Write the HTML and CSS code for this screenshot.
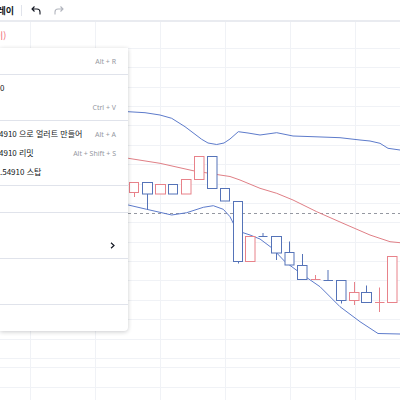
FILE: index.html
```html
<!DOCTYPE html>
<html lang="ko">
<head>
<meta charset="utf-8">
<title>Chart</title>
<link rel="stylesheet" href="styles.css">
</head>
<body>
<div class="app">
  <div class="toolbar">
    <span class="tb-title">리플레이</span>
    <span class="tb-sep"></span>
    <svg class="tb-icon undo" width="12" height="10" viewBox="0 0 12 10"><path d="M4.5 1.5 2 4l2.5 2.5M2 4h5a3 3 0 0 1 3 3v2.5" fill="none" stroke="#131722" stroke-width="1.1"/></svg>
    <svg class="tb-icon redo" width="12" height="10" viewBox="0 0 12 10"><path d="M7.5 1.5 10 4 7.5 6.5M10 4H5a3 3 0 0 0-3 3v2.5" fill="none" stroke="#b2b5be" stroke-width="1.1"/></svg>
  </div>
  <div class="chart">
    <svg class="chart-svg" width="400" height="378" viewBox="0 22 400 378">
      <g stroke="#f0f2f6" stroke-width="1">
        <line x1="30.5" y1="22" x2="30.5" y2="400"/>
        <line x1="95.5" y1="22" x2="95.5" y2="400"/>
        <line x1="160.5" y1="22" x2="160.5" y2="400"/>
        <line x1="225.5" y1="22" x2="225.5" y2="400"/>
        <line x1="290.5" y1="22" x2="290.5" y2="400"/>
        <line x1="355.5" y1="22" x2="355.5" y2="400"/>
        <line x1="0" y1="48.5" x2="400" y2="48.5"/>
        <line x1="0" y1="67.5" x2="400" y2="67.5"/>
        <line x1="0" y1="87.5" x2="400" y2="87.5"/>
        <line x1="0" y1="106.5" x2="400" y2="106.5"/>
        <line x1="0" y1="125.5" x2="400" y2="125.5"/>
        <line x1="0" y1="145.5" x2="400" y2="145.5"/>
        <line x1="0" y1="164.5" x2="400" y2="164.5"/>
        <line x1="0" y1="184.5" x2="400" y2="184.5"/>
        <line x1="0" y1="203.5" x2="400" y2="203.5"/>
        <line x1="0" y1="222.5" x2="400" y2="222.5"/>
        <line x1="0" y1="242.5" x2="400" y2="242.5"/>
        <line x1="0" y1="261.5" x2="400" y2="261.5"/>
        <line x1="0" y1="280.5" x2="400" y2="280.5"/>
        <line x1="0" y1="300.5" x2="400" y2="300.5"/>
        <line x1="0" y1="319.5" x2="400" y2="319.5"/>
        <line x1="0" y1="339.5" x2="400" y2="339.5"/>
        <line x1="0" y1="358.5" x2="400" y2="358.5"/>
        <line x1="0" y1="367.5" x2="400" y2="367.5"/>
        <line x1="0" y1="387.5" x2="400" y2="387.5"/>
      </g>
      <line x1="128" y1="213.5" x2="400" y2="213.5" stroke="#9598a1" stroke-width="1" stroke-dasharray="3 3"/>
      <g fill="none" stroke-width="1" stroke-linejoin="round">
        <polyline stroke="#5d7bcb" points="100,111 128,111.7 145,112.7 160,115 171.7,118.3 185,126.7 201.7,139.3 208,143 216.7,144.5 224,143 230,139 238.3,131.7 248,133 260,135 276.7,132.7 293,136 313,136.7 340,137.7 360,140 370,141 380,143.3 388,148.3 400,150"/>
        <polyline stroke="#e07f86" points="100,154 128.3,158.3 160,163.3 193,170.7 220,175 230,176.5 240,180 260,188.3 276.7,193.3 293,200 316.7,211.7 343,223.3 370,235 390,241.7 400,242.7"/>
        <polyline stroke="#5d7bcb" points="100,201 128.3,205 146.7,209.3 171.7,215 186.7,212.7 203.3,207.3 213.3,205.7 223.3,209.3 230,216.7 235,226.7 240,231.7 250,235 260,239 272,248 285,261.7 303,275 320,286.7 340,306.7 360,321.7 378,333.5 400,334"/>
      </g>
      <g fill="#fff" stroke-width="1">
        <g stroke="#e8828a">
          <line x1="134.5" y1="192.5" x2="134.5" y2="197"/>
          <rect x="129.5" y="182.5" width="9" height="10"/>
          <rect x="155.5" y="184.5" width="10" height="9.5"/>
          <rect x="181.5" y="179.5" width="9.5" height="14.5"/>
          <rect x="194.5" y="156.5" width="9.5" height="23"/>
          <rect x="245.5" y="236.5" width="9.5" height="25"/>
          <line x1="315.5" y1="275" x2="315.5" y2="279.5"/>
          <line x1="311" y1="279.5" x2="320.5" y2="279.5"/>
          <line x1="354.5" y1="282" x2="354.5" y2="305"/>
          <rect x="349.5" y="292.5" width="9.5" height="8"/>
          <line x1="379.5" y1="287.5" x2="379.5" y2="312"/>
          <line x1="375" y1="302.5" x2="384.5" y2="302.5"/>
          <rect x="387.5" y="256.5" width="9.5" height="46"/>
        </g>
        <g stroke="#5573b8">
          <line x1="147.5" y1="194" x2="147.5" y2="210"/>
          <rect x="142.5" y="182.5" width="10" height="11.5"/>
          <rect x="168.5" y="184.5" width="9" height="9.5"/>
          <rect x="207.5" y="156.5" width="9.5" height="32"/>
          <rect x="220.5" y="188.5" width="9" height="12.5"/>
          <line x1="238.5" y1="261" x2="238.5" y2="263.5"/>
          <rect x="233.5" y="201.5" width="9" height="60"/>
          <line x1="263" y1="233" x2="263" y2="236.5"/>
          <line x1="258.5" y1="236.5" x2="267.5" y2="236.5"/>
          <line x1="276.5" y1="253" x2="276.5" y2="260"/>
          <rect x="271.5" y="236.5" width="10" height="16.5"/>
          <line x1="289.5" y1="241.5" x2="289.5" y2="252.5"/>
          <rect x="285" y="252.5" width="9" height="12.5"/>
          <line x1="302.5" y1="254" x2="302.5" y2="265"/>
          <rect x="297.5" y="265.5" width="9.5" height="14"/>
          <line x1="328" y1="270" x2="328" y2="280.5"/>
          <line x1="323.5" y1="280.5" x2="333" y2="280.5"/>
          <line x1="341.5" y1="300.5" x2="341.5" y2="303.5"/>
          <rect x="336.5" y="280.5" width="9.5" height="20"/>
          <line x1="366.5" y1="285.5" x2="366.5" y2="292.5"/>
          <rect x="361.5" y="292.5" width="10" height="10"/>
        </g>
      </g>
    </svg>
    <div class="legend"><span class="legend-text">이)</span></div>
    <div class="menu">
      <div class="menu-section">
        <div class="menu-item"><span class="label"></span><span class="shortcut">Alt + R</span></div>
      </div>
      <div class="menu-section">
        <div class="menu-item"><span class="label">0</span></div>
        <div class="menu-item"><span class="label"></span><span class="shortcut">Ctrl + V</span></div>
      </div>
      <div class="menu-section">
        <div class="menu-item"><span class="label shift">4910 으로 얼러트 만들어</span><span class="shortcut">Alt + A</span></div>
        <div class="menu-item"><span class="label shift">4910 리밋</span><span class="shortcut">Alt + Shift + S</span></div>
        <div class="menu-item"><span class="label">.54910 스탑</span></div>
      </div>
      <div class="menu-section">
        <div class="menu-item"><span class="label"></span></div>
      </div>
      <div class="menu-section">
        <div class="menu-item"><span class="label"></span></div>
        <div class="menu-item"><span class="label"></span><svg class="chev" width="5" height="7" viewBox="0 0 5 7"><path d="M1 .8 4 3.5 1 6.2" fill="none" stroke="#131722" stroke-width="1.2"/></svg></div>
      </div>
      <div class="menu-section">
        <div class="menu-item"><span class="label"></span></div>
        <div class="menu-item"><span class="label"></span></div>
      </div>
      <div class="menu-section">
        <div class="menu-item"><span class="label"></span></div>
      </div>
    </div>
  </div>
</div>
</body>
</html>
```

FILE: styles.css
```css
html, body {
  margin: 0;
  padding: 0;
  background: #fff;
}
body {
  width: 400px;
  height: 400px;
  overflow: hidden;
  font-family: "Noto Sans CJK KR", "Noto Sans", "Liberation Sans", sans-serif;
  color: #131722;
}
.app {
  display: flex;
  flex-direction: column;
  width: 400px;
  height: 400px;
}
.toolbar {
  flex: 0 0 auto;
  height: 20px;
  border-bottom: 2px solid #e9ebf0;
  display: flex;
  align-items: center;
  background: #fff;
  overflow: hidden;
}
.tb-title {
  font-size: 9px;
  font-weight: 700;
  margin-left: -19px;
  white-space: nowrap;
  line-height: 1;
}
.tb-sep {
  width: 1px;
  height: 11px;
  background: #e0e3eb;
  margin-left: 7px;
}
.tb-icon {
  display: block;
}
.undo {
  margin-left: 8px;
}
.redo {
  margin-left: 11px;
}
.chart {
  flex: 1 1 auto;
  position: relative;
  overflow: hidden;
}
.chart-svg {
  display: block;
}
.legend {
  position: absolute;
  top: 0;
  left: 0;
  height: 26px;
  display: flex;
  align-items: center;
}
.legend-text {
  font-size: 9px;
  color: #f0656f;
  margin-left: -5px;
  line-height: 1;
}
.menu {
  position: absolute;
  top: 26px;
  left: 0;
  width: 128px;
  background: #fff;
  border-radius: 0 0 4px 0;
  box-shadow: 0 1px 4px rgba(19, 23, 34, 0.22);
  overflow: hidden;
}
.menu-section {
  padding: 3.5px 0;
}
.menu-section + .menu-section {
  border-top: 1px solid #e0e3eb;
}
.menu-item {
  height: 19px;
  display: flex;
  align-items: center;
  justify-content: space-between;
  padding-right: 12px;
  white-space: nowrap;
}
.label {
  font-size: 8px;
  color: #131722;
  line-height: 1;
}
.label.shift {
  margin-left: -1px;
}
.shortcut {
  font-size: 7px;
  color: #9598a1;
  font-family: "Noto Sans", "Liberation Sans", sans-serif;
  line-height: 1;
}
.chev {
  display: block;
  margin-right: 1px;
}
```
